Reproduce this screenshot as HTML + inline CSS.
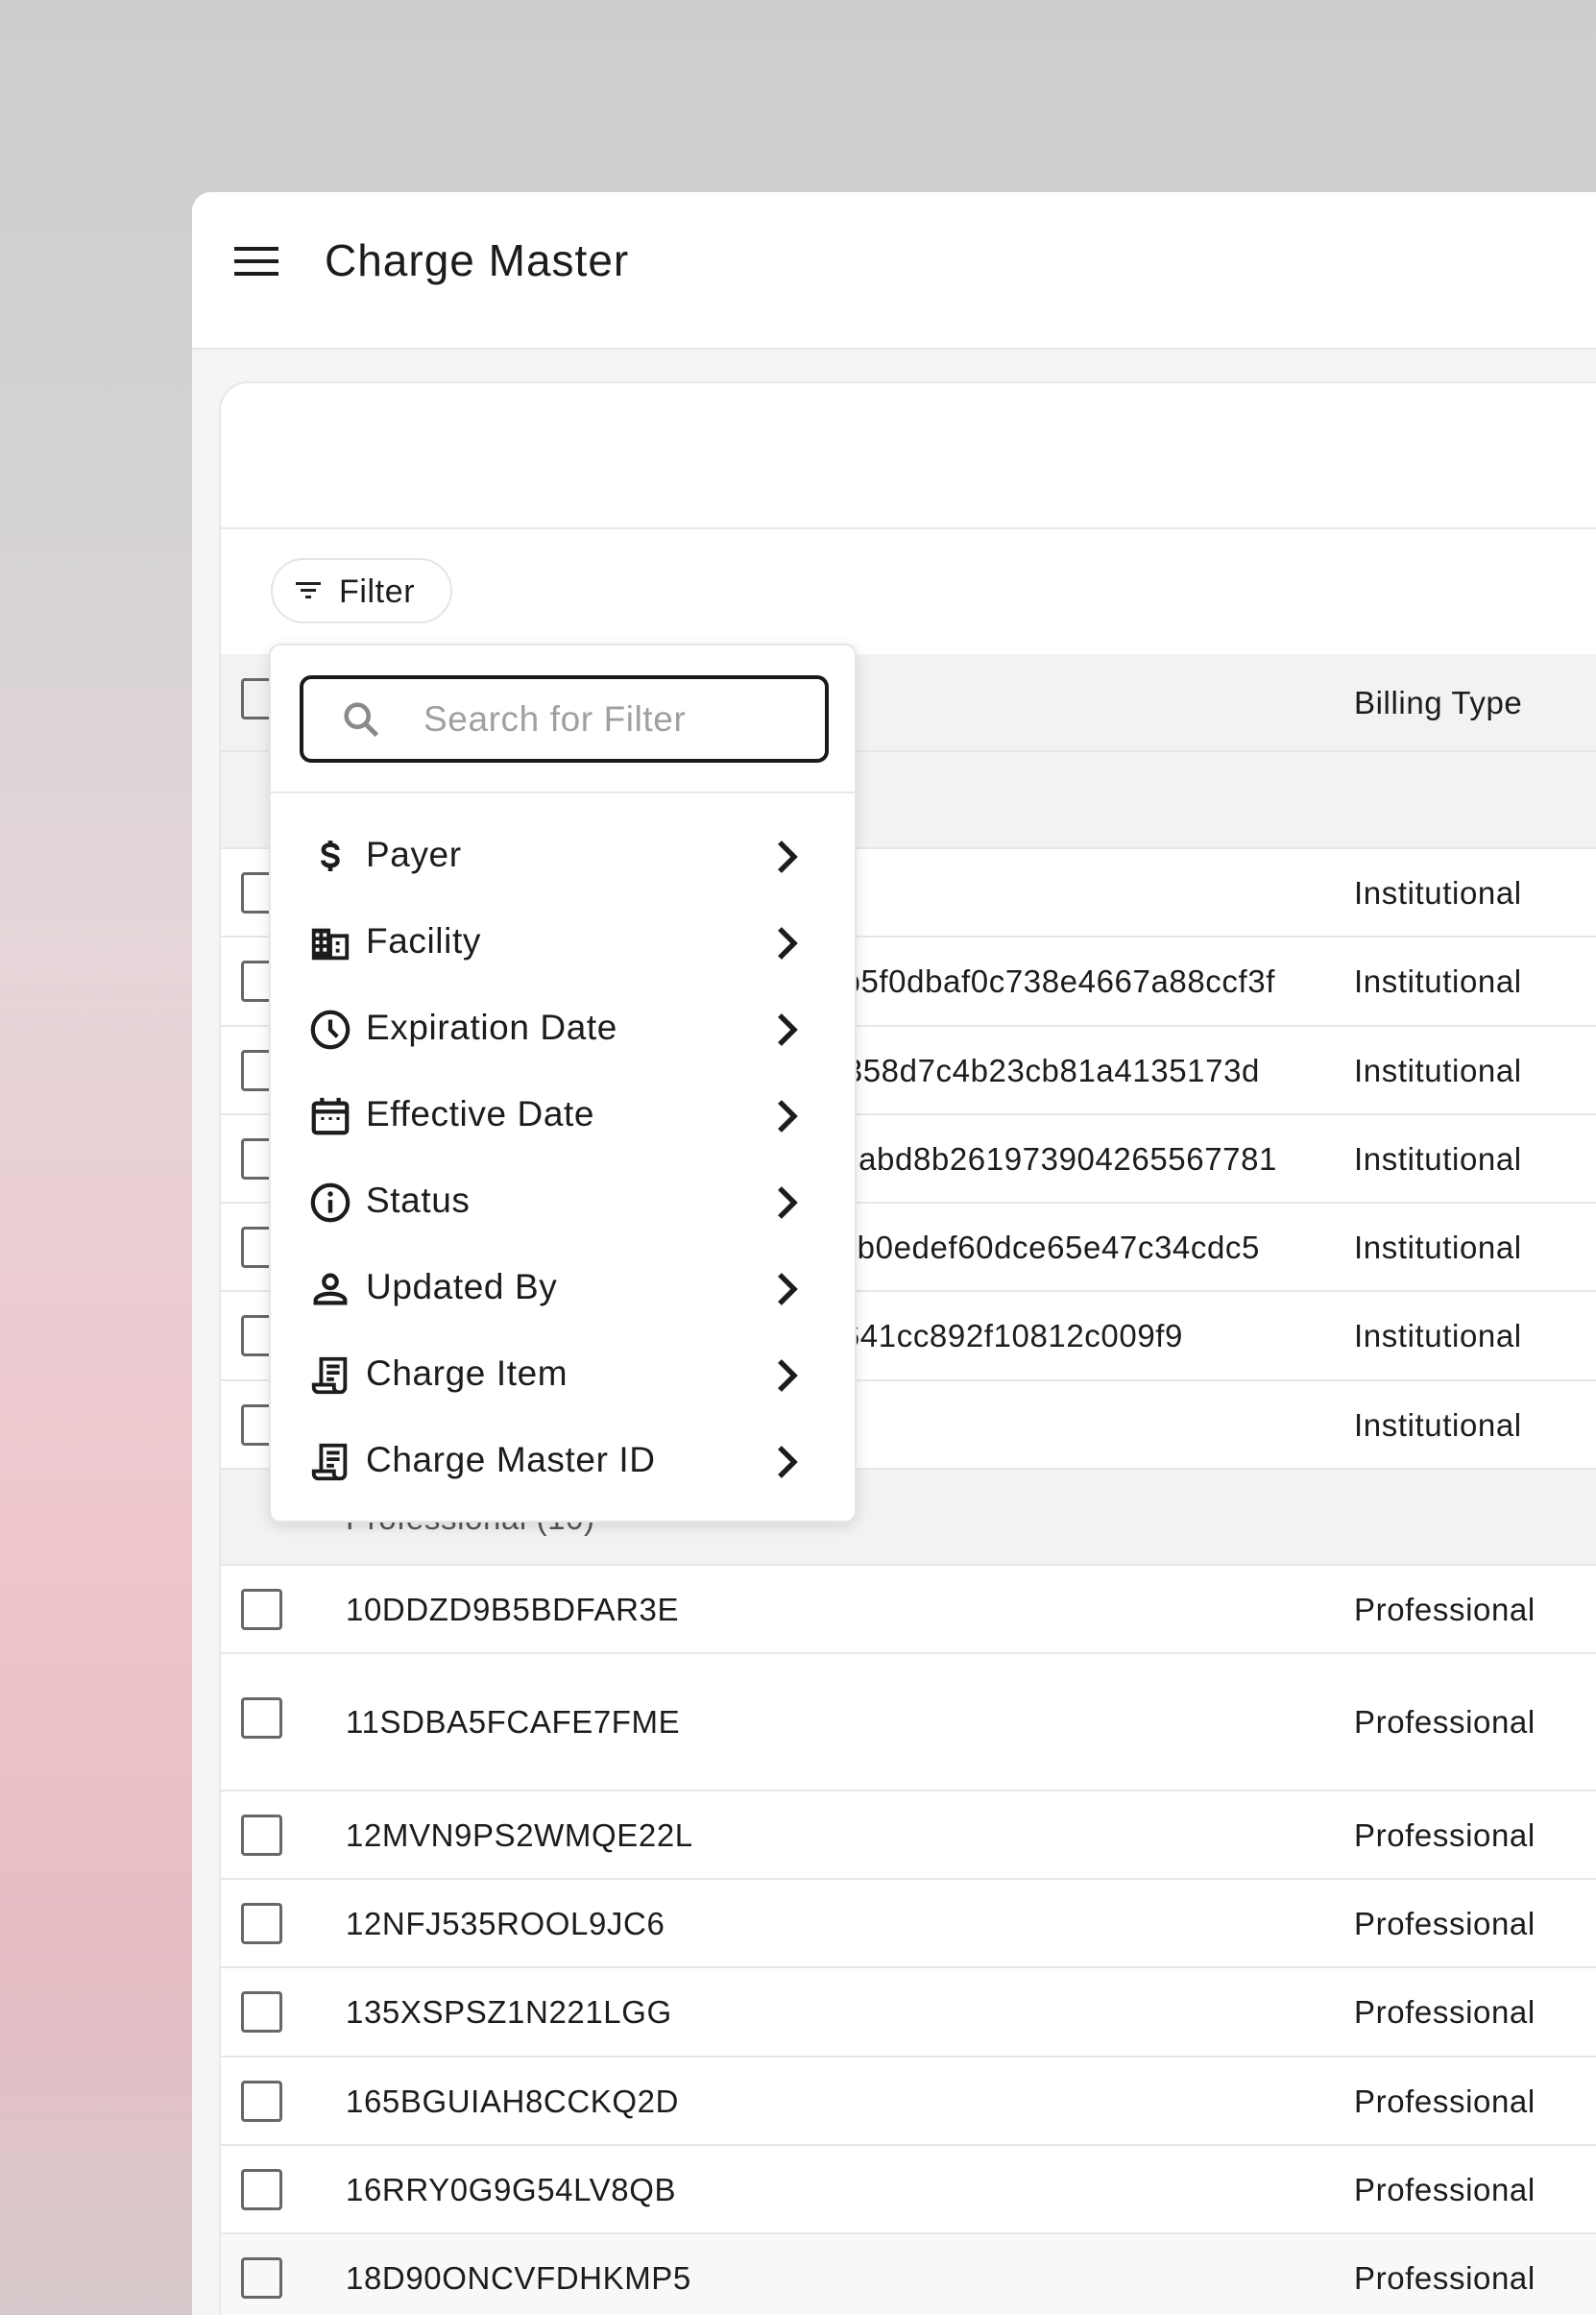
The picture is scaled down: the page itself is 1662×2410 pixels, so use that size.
<!DOCTYPE html>
<html><head><meta charset="utf-8"><style>
*{margin:0;padding:0;box-sizing:border-box}
html,body{width:1662px;height:2410px;overflow:hidden}
body{font-family:"Liberation Sans",sans-serif;color:#1c1c1c;position:relative;
background:linear-gradient(180deg,#cbcdcf 0px,#d3d2d4 500px,#e6d6d9 1000px,#efc6cc 1600px,#e8bcc3 2000px,#d6c9cb 2410px);}
.win{position:absolute;left:200px;top:200px;width:1462px;height:2210px;background:#f5f5f5;border-radius:20px 0 0 0;overflow:hidden}
.hdr{position:absolute;left:0;top:0;right:0;height:164px;background:#fff;border-bottom:2px solid #e6e6e6}
.ham{position:absolute;left:44px;top:57px;width:46px}
.ham i{display:block;height:4px;background:#1c1c1c;margin-bottom:9px}
.title{position:absolute;left:138px;top:44px;font-size:46px;color:#1c1c1c;letter-spacing:1px}
.card{position:absolute;left:28px;top:197px;width:1440px;height:2020px;background:#fff;border-radius:30px 0 0 0;border:2px solid #e8e8e8;border-right:none;border-bottom:none}
.abs{position:absolute}
.row{position:absolute;left:0;right:0;border-bottom:2px solid #e6e8e8;background:#fff}
.grey{background:#f1f3f3}
.cb{position:absolute;left:21px;width:43px;height:43px;border:3.5px solid #676767;border-radius:4px}
.txt{position:absolute;font-size:33px;white-space:nowrap;letter-spacing:0.6px}
.menu{position:absolute;left:280px;top:670px;width:612px;height:915px;background:#fff;border-radius:12px;border:2px solid #e6e6e6;box-shadow:0 4px 14px rgba(0,0,0,.12);z-index:5}
.search{position:absolute;left:30px;top:31px;width:551px;height:91px;border:4px solid #1a1a1a;border-radius:12px}
.item{position:absolute;left:0;right:0;height:90px}
.item .lbl{position:absolute;left:99px;top:22px;font-size:37px;color:#1c1c1c;letter-spacing:0.6px}
.item svg.ic{position:absolute;left:39px;top:22px}
.item svg.ch{position:absolute;left:524px;top:27px}
</style></head><body>
<div class="win">
 <div class="hdr">
  <div class="ham"><i></i><i></i><i></i></div>
  <div class="title">Charge Master</div>
 </div>
 <div class="card">
  <div class="abs" style="left:0;right:0;top:150px;height:2px;background:#e6e6e6"></div>
  <div class="abs" style="left:52px;top:182px;width:189px;height:68px;border:2px solid #e4e4e4;border-radius:34px">
   <svg class="abs" style="left:22px;top:20px" width="30" height="24" viewBox="0 0 30 24"><rect x="2" y="3" width="26" height="3" fill="#222"/><rect x="7" y="10" width="16" height="3" fill="#222"/><rect x="12" y="17" width="6" height="3" fill="#222"/></svg>
   <div class="abs" style="left:69px;top:14px;font-size:34px;letter-spacing:0.6px">Filter</div>
  </div>
 </div>
</div>

<div class="abs" style="left:230px;top:681px;width:1432px;height:1729px;overflow:hidden">
 <div class="row grey" style="top:0;height:102px"><div class="cb" style="top:25px"></div><div class="txt" style="left:1180px;top:32px">Billing Type</div></div>
 <div class="row grey" style="top:102px;height:101px"></div>
 <div class="row" style="top:203px;height:92px"><div class="cb" style="top:24px"></div><div class="txt" style="left:1180px;top:27px">Institutional</div></div>
 <div class="row" style="top:295px;height:93px"><div class="cb" style="top:24px"></div><div class="txt" style="right:334px;top:27px">7e3a9c2b5f0dbaf0c738e4667a88ccf3f</div><div class="txt" style="left:1180px;top:27px">Institutional</div></div>
 <div class="row" style="top:388px;height:92px"><div class="cb" style="top:24px"></div><div class="txt" style="right:350px;top:27px">a4c19e7358d7c4b23cb81a4135173d</div><div class="txt" style="left:1180px;top:27px">Institutional</div></div>
 <div class="row" style="top:480px;height:92px"><div class="cb" style="top:24px"></div><div class="txt" style="right:332px;top:27px">3f2e1abd8b261973904265567781</div><div class="txt" style="left:1180px;top:27px">Institutional</div></div>
 <div class="row" style="top:572px;height:92px"><div class="cb" style="top:24px"></div><div class="txt" style="right:350px;top:27px">8c1a55b0edef60dce65e47c34cdc5</div><div class="txt" style="left:1180px;top:27px">Institutional</div></div>
 <div class="row" style="top:664px;height:93px"><div class="cb" style="top:24px"></div><div class="txt" style="right:430px;top:27px">d93e2a7641cc892f10812c009f9</div><div class="txt" style="left:1180px;top:27px">Institutional</div></div>
 <div class="row" style="top:757px;height:92px"><div class="cb" style="top:24px"></div><div class="txt" style="left:1180px;top:27px">Institutional</div></div>
 <div class="row grey" style="top:849px;height:100px"><div class="txt" style="left:130px;top:32px;color:#555">Professional (10)</div></div>
 <div class="row" style="top:949px;height:92px"><div class="cb" style="top:24px"></div><div class="txt" style="left:130px;top:27px">10DDZD9B5BDFAR3E</div><div class="txt" style="left:1180px;top:27px">Professional</div></div>
 <div class="row" style="top:1041px;height:143px"><div class="cb" style="top:45px"></div><div class="txt" style="left:130px;top:52px">11SDBA5FCAFE7FME</div><div class="txt" style="left:1180px;top:52px">Professional</div></div>
 <div class="row" style="top:1184px;height:92px"><div class="cb" style="top:24px"></div><div class="txt" style="left:130px;top:27px">12MVN9PS2WMQE22L</div><div class="txt" style="left:1180px;top:27px">Professional</div></div>
 <div class="row" style="top:1276px;height:92px"><div class="cb" style="top:24px"></div><div class="txt" style="left:130px;top:27px">12NFJ535ROOL9JC6</div><div class="txt" style="left:1180px;top:27px">Professional</div></div>
 <div class="row" style="top:1368px;height:93px"><div class="cb" style="top:24px"></div><div class="txt" style="left:130px;top:27px">135XSPSZ1N221LGG</div><div class="txt" style="left:1180px;top:27px">Professional</div></div>
 <div class="row" style="top:1461px;height:92px"><div class="cb" style="top:24px"></div><div class="txt" style="left:130px;top:27px">165BGUIAH8CCKQ2D</div><div class="txt" style="left:1180px;top:27px">Professional</div></div>
 <div class="row" style="top:1553px;height:92px"><div class="cb" style="top:24px"></div><div class="txt" style="left:130px;top:27px">16RRY0G9G54LV8QB</div><div class="txt" style="left:1180px;top:27px">Professional</div></div>
 <div class="row" style="top:1645px;height:84px;background:#f7f8f8;border-bottom:none"><div class="cb" style="top:24px"></div><div class="txt" style="left:130px;top:27px">18D90ONCVFDHKMP5</div><div class="txt" style="left:1180px;top:27px">Professional</div></div>
</div>
<div class="abs" style="left:228px;top:681px;width:2px;height:1729px;background:#e8e8e8"></div>

<div class="menu">
 <div class="search">
  <svg class="abs" style="left:38px;top:20px" width="46" height="46" viewBox="0 0 24 24"><circle cx="9.5" cy="9.5" r="6" fill="none" stroke="#8a8a8a" stroke-width="2.4"/><path d="M14 14l6 6" stroke="#8a8a8a" stroke-width="2.6"/></svg>
  <div class="abs" style="left:125px;top:21px;font-size:37px;color:#a0a0a0;letter-spacing:0.6px">Search for Filter</div>
 </div>
 <div class="abs" style="left:0;right:0;top:152px;height:2px;background:#e8e8e8"></div>
 <div class="item" style="top:175px"><svg class="ic" width="46" height="46" viewBox="0 0 24 24"><path d="M15.8 8.3c0-1.7-1.5-2.8-3.8-2.8s-3.7 1.1-3.7 2.7c0 3.8 7.6 2.1 7.6 5.8 0 1.7-1.6 2.8-3.9 2.8s-3.9-1.2-4-2.9M12 3.2v2.6M12 16.8v3" fill="none" stroke="#1c1c1c" stroke-width="2.4"/></svg><div class="lbl">Payer</div><svg class="ch" width="30" height="36" viewBox="0 0 10 12"><path d="M2 1l5 5-5 5" fill="none" stroke="#1c1c1c" stroke-width="1.8"/></svg></div>
 <div class="item" style="top:265px"><svg class="ic" width="46" height="46" viewBox="0 0 24 24"><path d="M2 4h10v3h10v14H2z" fill="#1c1c1c"/><g fill="#fff"><rect x="4" y="6.5" width="2" height="2"/><rect x="8" y="6.5" width="2" height="2"/><rect x="4" y="10.5" width="2" height="2"/><rect x="8" y="10.5" width="2" height="2"/><rect x="4" y="14.5" width="2" height="2"/><rect x="8" y="14.5" width="2" height="2"/><rect x="13" y="9" width="7" height="10"/></g><rect x="15" y="11" width="2" height="2" fill="#1c1c1c"/><rect x="15" y="15" width="2" height="2" fill="#1c1c1c"/></svg><div class="lbl">Facility</div><svg class="ch" width="30" height="36" viewBox="0 0 10 12"><path d="M2 1l5 5-5 5" fill="none" stroke="#1c1c1c" stroke-width="1.8"/></svg></div>
 <div class="item" style="top:355px"><svg class="ic" width="46" height="46" viewBox="0 0 24 24"><circle cx="12" cy="12" r="9.5" fill="none" stroke="#1c1c1c" stroke-width="2.2"/><path d="M12 6.5v5.5l3.8 3.8" fill="none" stroke="#1c1c1c" stroke-width="2.2"/></svg><div class="lbl">Expiration Date</div><svg class="ch" width="30" height="36" viewBox="0 0 10 12"><path d="M2 1l5 5-5 5" fill="none" stroke="#1c1c1c" stroke-width="1.8"/></svg></div>
 <div class="item" style="top:445px"><svg class="ic" width="46" height="46" viewBox="0 0 24 24"><rect x="3" y="5" width="18" height="16" rx="1.5" fill="none" stroke="#1c1c1c" stroke-width="2.2"/><path d="M3 9.5h18M7.5 2v4M16.5 2v4" stroke="#1c1c1c" stroke-width="2.2"/><g fill="#1c1c1c"><rect x="7" y="12.5" width="1.6" height="1.6"/><rect x="11.2" y="12.5" width="1.6" height="1.6"/><rect x="15.4" y="12.5" width="1.6" height="1.6"/></g></svg><div class="lbl">Effective Date</div><svg class="ch" width="30" height="36" viewBox="0 0 10 12"><path d="M2 1l5 5-5 5" fill="none" stroke="#1c1c1c" stroke-width="1.8"/></svg></div>
 <div class="item" style="top:535px"><svg class="ic" width="46" height="46" viewBox="0 0 24 24"><circle cx="12" cy="12" r="9.5" fill="none" stroke="#1c1c1c" stroke-width="2.2"/><path d="M12 10.5v7" stroke="#1c1c1c" stroke-width="2.3"/><circle cx="12" cy="7.3" r="1.4" fill="#1c1c1c"/></svg><div class="lbl">Status</div><svg class="ch" width="30" height="36" viewBox="0 0 10 12"><path d="M2 1l5 5-5 5" fill="none" stroke="#1c1c1c" stroke-width="1.8"/></svg></div>
 <div class="item" style="top:625px"><svg class="ic" width="46" height="46" viewBox="0 0 24 24"><circle cx="12" cy="8" r="3.5" fill="none" stroke="#1c1c1c" stroke-width="2.2"/><path d="M4 19.5v-1.5c0-2 4-3.5 8-3.5s8 1.5 8 3.5v1.5z" fill="none" stroke="#1c1c1c" stroke-width="2.2"/></svg><div class="lbl">Updated By</div><svg class="ch" width="30" height="36" viewBox="0 0 10 12"><path d="M2 1l5 5-5 5" fill="none" stroke="#1c1c1c" stroke-width="1.8"/></svg></div>
 <div class="item" style="top:715px"><svg class="ic" width="46" height="46" viewBox="0 0 24 24"><path d="M7 17V3h13v15.5a2.5 2.5 0 0 1-2.5 2.5H5.5A2.5 2.5 0 0 1 3 18.5V17h11v1.5a2.5 2.5 0 0 0 2.5 2.5" fill="none" stroke="#1c1c1c" stroke-width="2"/><path d="M10 7h7M10 10.5h7M10 14h4" stroke="#1c1c1c" stroke-width="2"/></svg><div class="lbl">Charge Item</div><svg class="ch" width="30" height="36" viewBox="0 0 10 12"><path d="M2 1l5 5-5 5" fill="none" stroke="#1c1c1c" stroke-width="1.8"/></svg></div>
 <div class="item" style="top:805px"><svg class="ic" width="46" height="46" viewBox="0 0 24 24"><path d="M7 17V3h13v15.5a2.5 2.5 0 0 1-2.5 2.5H5.5A2.5 2.5 0 0 1 3 18.5V17h11v1.5a2.5 2.5 0 0 0 2.5 2.5" fill="none" stroke="#1c1c1c" stroke-width="2"/><path d="M10 7h7M10 10.5h7M10 14h4" stroke="#1c1c1c" stroke-width="2"/></svg><div class="lbl">Charge Master ID</div><svg class="ch" width="30" height="36" viewBox="0 0 10 12"><path d="M2 1l5 5-5 5" fill="none" stroke="#1c1c1c" stroke-width="1.8"/></svg></div>
</div>
</body></html>
